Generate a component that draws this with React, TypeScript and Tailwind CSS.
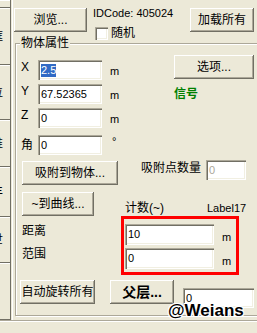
import React from "react";

const BTN =
  "flex items-center justify-center bg-[#ece9d8] shadow-[inset_-1px_-1px_0_#716f64,inset_1px_1px_0_#fff,inset_-2px_-2px_0_#aca899] text-black text-[12px] leading-[14px] whitespace-nowrap";
const INPUT =
  "flex items-center bg-white pl-[3px] shadow-[inset_1px_1px_0_#aca899,inset_2px_2px_0_#716f64,inset_-1px_-1px_0_#fff,inset_-2px_-2px_0_#f1efe2] text-[11px] leading-[13px] whitespace-nowrap overflow-hidden";

function Field({
  label,
  value,
  unit,
  cjk,
  className,
  children,
}: {
  label: string;
  value?: string;
  unit: string;
  cjk?: boolean;
  className?: string;
  children?: React.ReactNode;
}) {
  return (
    <div className={"flex h-[20px] items-center " + (className ?? "")}>
      <span
        className={
          "w-[22px] pl-[5px] " +
          (cjk ? "text-[12px] leading-[14px]" : "text-[12px] leading-[13px] -mt-[5px]")
        }
      >
        {label}
      </span>
      <div className={INPUT + " w-[64px] h-[20px]"}>{children ?? value}</div>
      {unit === "°" ? (
        <span className="ml-[10px] self-start mt-[1px] text-[11px] leading-[11px]">°</span>
      ) : (
        <span className="ml-[8px] text-[11px] leading-[13px] mt-[3px]">{unit}</span>
      )}
    </div>
  );
}

function StripSeg({ h, text }: { h: string; text?: string }) {
  return (
    <div
      className={
        h +
        " flex items-center justify-end pr-[8px] overflow-hidden shadow-[inset_-1px_-1px_0_#716f64,inset_0_1px_0_#fff] text-[12px] leading-[14px] whitespace-nowrap"
      }
    >
      {text}
    </div>
  );
}

export default function App() {
  return (
    <div className="w-[257px] h-[333px] bg-[#ece9d8] overflow-hidden relative flex flex-col font-['Liberation_Sans','Noto_Sans_CJK_SC',sans-serif] text-[11px] text-black">
      <div className="flex h-[320px] shrink-0">
        {/* clipped left strip */}
        <div className="w-[11px] flex flex-col shrink-0">
          <StripSeg h="h-[8px]" />
          <StripSeg h="h-[57px]" text="框" />
          <StripSeg h="h-[55px]" text="位" />
          <StripSeg h="h-[47px]" text="推" />
          <StripSeg h="h-[50px]" text="丰" />
          <StripSeg h="h-[46px]" text="世" />
          <StripSeg h="h-[57px]" />
        </div>
        <div className="w-[1px] shrink-0" />
        {/* main panel */}
        <div className="flex-1 border-l border-white flex flex-col min-w-0">
          {/* row 1 */}
          <div className="mt-[8px] flex h-[24px] items-start">
            <div className={BTN + " ml-[1px] w-[73px] h-[24px] shrink-0"}>浏览...</div>
            <div className="ml-[6px] w-[97px] shrink-0 flex flex-col -mt-[1px]">
              <span className="leading-[13px] whitespace-nowrap">IDCode: 405024</span>
              <div className="flex items-center mt-[6px]">
                <div className="ml-[2px] w-[13px] h-[13px] bg-white shadow-[inset_1px_1px_0_#aca899,inset_2px_2px_0_#716f64,inset_-1px_-1px_0_#fff,inset_-2px_-2px_0_#f1efe2]" />
                <span className="ml-[3px] text-[12px] leading-[14px]">随机</span>
              </div>
            </div>
            <div className={BTN + " w-[64px] h-[24px] shrink-0"}>加载所有</div>
          </div>

          {/* group box */}
          <div className="relative mt-[11px] ml-[2px] w-[260px] h-[273px] shrink-0 border border-[#aca899] shadow-[inset_1px_1px_0_#fff,1px_1px_0_#fff] flex flex-col">
            <span className="absolute left-[4px] top-[-8px] bg-[#ece9d8] px-[1px] text-[12px] leading-[14px]">
              物体属性
            </span>

            {/* Row A */}
            <div className="mt-[11px] flex h-[100px]">
              <div className="w-[158px] flex flex-col shrink-0">
                <Field label="X" unit="m" className="mt-[5px]">
                  <span className="bg-[#316ac5] text-white">2.5</span>
                </Field>
                <Field label="Y" unit="m" value="67.52365" className="mt-[4px]" />
                <Field label="Z" unit="m" value="0" className="mt-[4px]" />
                <Field label="角" unit="°" value="0" cjk className="mt-[7px]" />
              </div>
              <div className="flex flex-col">
                <div className={BTN + " w-[80px] h-[24px]"}>选项...</div>
                <span className="mt-[8px] text-[12px] leading-[14px] font-bold text-[#008000]">信号</span>
              </div>
            </div>

            {/* Row B */}
            <div className="mt-[5px] flex items-start h-[25px]">
              <div className={BTN + " ml-[6px] mt-[1px] w-[96px] h-[24px] shrink-0"}>吸附到物体...</div>
              <span className="ml-[23px] mt-[1px] w-[60px] text-[12px] leading-[14px] whitespace-nowrap">吸附点数量</span>
              <div className={INPUT + " ml-[5px] w-[40px] h-[20px] text-[#aca899]"}>0</div>
            </div>

            {/* Row C */}
            <div className="mt-[7px] flex">
              <div className="w-[105px] flex flex-col shrink-0">
                <div className={BTN + " ml-[6px] w-[72px] h-[24px]"}>~到曲线...</div>
                <span className="ml-[6px] mt-[8px] text-[12px] leading-[14px]">距离</span>
                <span className="ml-[6px] mt-[9px] text-[12px] leading-[14px]">范围</span>
              </div>
              <div className="flex flex-col">
                <div className="mt-[9px] flex h-[14px] items-center">
                  <span className="pl-[4px] w-[86px] text-[12px] leading-[14px] whitespace-nowrap">计数(~)</span>
                  <span className="text-[11px] leading-[13px] whitespace-nowrap">Label17</span>
                </div>
                <div className="mt-[1px] w-[118px] h-[59px] border-[3px] border-[#ff0000] flex flex-col">
                  <div className="mt-[5px] flex items-end">
                    <div className={INPUT + " ml-[1px] w-[89px] h-[21px]"}>10</div>
                    <span className="ml-[8px] mb-[1px] text-[11px] leading-[13px]">m</span>
                  </div>
                  <div className="mt-[3px] flex items-end">
                    <div className={INPUT + " ml-[1px] w-[89px] h-[21px]"}>0</div>
                    <span className="ml-[8px] mb-[1px] text-[11px] leading-[13px]">m</span>
                  </div>
                </div>
              </div>
            </div>

            {/* Row D */}
            <div className="mt-[5px] flex items-start">
              <div className={BTN + " ml-[4px] w-[75px] h-[24px] shrink-0"}>自动旋转所有</div>
              <div className={BTN + " ml-[15px] w-[64px] h-[24px] shrink-0 !text-[14px] font-bold"}>父层...</div>
              <div className={INPUT + " ml-[9px] mt-[8px] w-[71px] h-[20px]"}>0</div>
            </div>
          </div>
        </div>
      </div>
      <div className="h-[1px] bg-[#aca899] shrink-0" />
      <div className="h-[1px] bg-white shrink-0" />

      {/* watermark */}
      <span className="absolute left-[168px] top-[302px] text-[17px] leading-[18px] font-bold text-black whitespace-nowrap [text-shadow:1px_0_#fff,-1px_0_#fff,0_1px_#fff,0_-1px_#fff,1px_1px_#fff,-1px_-1px_#fff,1px_-1px_#fff,-1px_1px_#fff]">
        @Weians
      </span>
    </div>
  );
}
